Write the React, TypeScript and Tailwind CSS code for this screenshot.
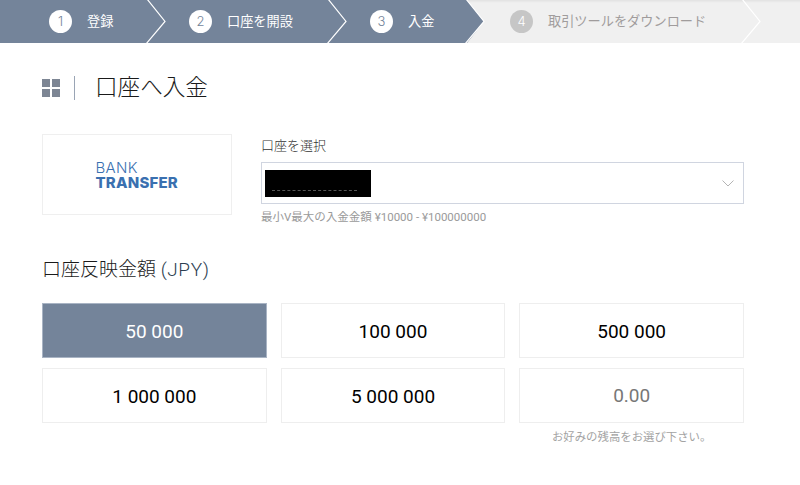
import React from "react";

const jp = "font-['Roboto','Noto_Sans_CJK_JP',sans-serif]";

const steps = [
  { n: 1, label: "登録", width: "w-[165px]", pad: "pl-[49px]", shape: "" },
  { n: 2, label: "口座を開設", width: "w-[181px]", pad: "pl-[24px]", shape: "" },
  {
    n: 3,
    label: "入金",
    width: "w-[138px]",
    pad: "pl-[24px]",
    shape: "[clip-path:polygon(0_0,121px_0,138px_50%,121px_100%,0_100%)]",
  },
];

const amounts = ["50 000", "100 000", "500 000", "1 000 000", "5 000 000"];

function Chevron() {
  return (
    <svg width="22" height="43" viewBox="0 0 22 43" className="absolute top-0 right-[-3px] z-10">
      <polyline points="1,-1 19,21.5 0,44" fill="none" stroke="#ffffff" strokeWidth="1.2" />
    </svg>
  );
}

function Stepper() {
  return (
    <div className="flex h-[43px] bg-[#f0f0f0] shadow-[inset_0_4px_3px_-3px_rgba(0,0,0,0.08)]">
      {steps.map((s) => (
        <div key={s.n} className={`relative flex items-center ${s.width} ${s.pad}`}>
          <div className={`absolute inset-0 bg-[#74849a] ${s.shape}`} />
          <span className="relative flex h-[23px] w-[23px] items-center justify-center rounded-full bg-white font-['Inter',sans-serif] text-[13px] font-light text-[#74849a]">
            {s.n}
          </span>
          <span className="relative ml-[15px] text-[13.2px] text-white">{s.label}</span>
          <Chevron />
        </div>
      ))}
      <div className="relative flex w-[276px] items-center pl-[26px]">
        <span className="flex h-[23px] w-[23px] items-center justify-center rounded-full bg-[#c6c6c6] font-['Inter',sans-serif] text-[13px] font-light text-white">
          4
        </span>
        <span className="ml-[15px] text-[13.2px] text-[#a09c9c]">取引ツールをダウンロード</span>
        <Chevron />
      </div>
    </div>
  );
}

function AmountCard({ value, active }: { value: string; active?: boolean }) {
  return (
    <div
      className={
        active
          ? "flex h-[55px] items-center justify-center border border-[#a9b4c4] bg-[#74849a] pt-[4px] text-[19px] text-white"
          : "flex h-[55px] items-center justify-center border border-[#eeeeee] bg-white pt-[4px] text-[19px] text-black"
      }
    >
      {value}
    </div>
  );
}

export default function App() {
  return (
    <div className={`h-[485px] w-[800px] overflow-hidden bg-white ${jp}`}>
      <Stepper />

      <div className="pl-[42px] pr-[56px]">
        <div className="mt-[33px] flex h-[24px] items-center">
          <div className="grid grid-cols-2 gap-[2px]">
            <span className="h-[8px] w-[8px] bg-[#7d8694]" />
            <span className="h-[8px] w-[8px] bg-[#7d8694]" />
            <span className="h-[8px] w-[8px] bg-[#7d8694]" />
            <span className="h-[8px] w-[8px] bg-[#7d8694]" />
          </div>
          <div className="ml-[14px] h-[24px] w-px bg-[#9aa5b5]" />
          <h1 className="ml-[20px] text-[22.6px] leading-none font-light text-[#1a1a1a]">口座へ入金</h1>
        </div>

        <div className="mt-[34px] flex items-start">
          <div className="flex h-[81px] w-[190px] flex-col items-center justify-center border border-[#efefef] font-['Inter',sans-serif] text-[#3a70b0]">
            <div className="w-[83px]">
              <div className="text-[15px] leading-[15px] font-light tracking-[0.3px]">BANK</div>
              <div className="text-[15px] leading-[15px] font-extrabold tracking-[0.2px]">TRANSFER</div>
            </div>
          </div>

          <div className="ml-[29px] flex-1">
            <label className="mt-[2px] block text-[13px] leading-[20px] font-light text-[#333333]">口座を選択</label>
            <div className="mt-[6px] flex h-[42px] items-center justify-between border border-[#d0d5e0] pr-[9px] pl-[3px]">
              <div className="flex h-[27px] w-[106px] items-end bg-black px-[7px] pb-[6px]">
                <div className="w-[85px] border-b border-dashed border-[#555555]" />
              </div>
              <svg width="12" height="7" viewBox="0 0 12 7" fill="none">
                <polyline points="0.5,0.5 6,6 11.5,0.5" stroke="#b4b4b4" strokeWidth="1" />
              </svg>
            </div>
            <p className="mt-[5px] text-[11.5px] leading-[16px] text-[#9a9a9a]">最小V最大の入金金額 ¥10000 - ¥100000000</p>
          </div>
        </div>

        <h2 className="mt-[32px] text-[19px] leading-[26px] font-light text-[#1a1a1a]">
          口座反映金額 <span className="tracking-[0.6px] text-[#2c3e50]">(JPY)</span>
        </h2>

        <div className="mt-[20px] grid grid-cols-3 gap-x-[14px] gap-y-[10px]">
          {amounts.map((a, i) => (
            <AmountCard key={a} value={a} active={i === 0} />
          ))}
          <div className="flex h-[55px] items-center justify-center border border-[#eeeeee] pt-[2px] text-[19px] text-[#777777]">
            0.00
          </div>
          <p className="col-start-3 -mt-[4px] text-center text-[11.4px] leading-[16px] text-[#a3a3a3]">
            お好みの残高をお選び下さい。
          </p>
        </div>
      </div>
    </div>
  );
}
